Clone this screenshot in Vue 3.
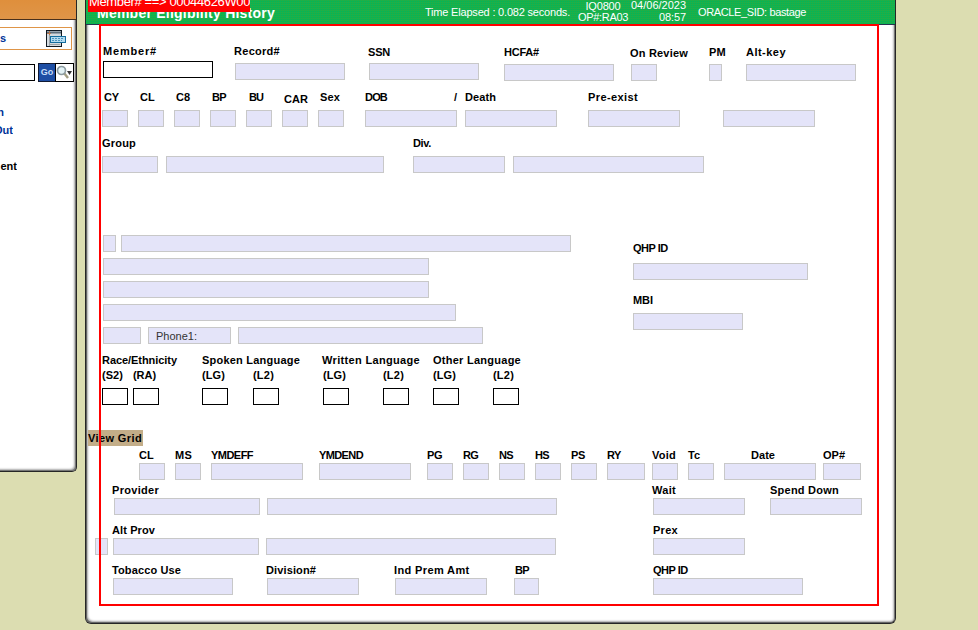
<script setup>
const ctx = document.createElement('canvas').getContext('2d')

function spacing(text, width, font) {
  ctx.font = font
  return (width - ctx.measureText(text).width) / text.length + 'px'
}

const label = (text, x, w, y) => ({ kind: 'label', text, x, w, y })
const field = (x, w, y, text) => ({ kind: 'field', x, w, y, text })
const entry = (x, w, y) => ({ kind: 'entry', x, w, y })
const heightOf = { label: 12, field: 17, entry: 17, tag: 16 }

const row = (...items) => items
const labels = (y, ...list) => list.map(([t, x, w, own]) => label(t, x, w, own ?? y))
const fields = (y, ...list) => list.map(([x, w, t]) => field(x, w, y, t))

function flow(rows, x0, y0) {
  let bottom = y0
  return rows.map((items) => {
    const top = Math.min(...items.map((i) => i.y))
    const end = Math.max(...items.map((i) => i.y + heightOf[i.kind]))
    let right = x0
    const cells = items.map((i) => {
      const style = { marginLeft: i.x - right + 'px', marginTop: i.y - top + 'px', width: i.w + 'px' }
      if (i.kind === 'label' || i.kind === 'tag') {
        style.letterSpacing = spacing(i.text, i.kind === 'tag' ? 54 : i.w, 'bold 11px "Liberation Sans"')
      }
      right = i.x + i.w
      return { ...i, style }
    })
    const style = { marginTop: top - bottom + 'px', height: end - top + 'px' }
    bottom = end
    return { cells, style }
  })
}

const sections = [
  [flow([
    labels(46, ['Member#', 103, 54, 45], ['Record#', 234, 46, 45], ['SSN', 368, 22], ['HCFA#', 504, 35], ['On Review', 630, 58, 47], ['PM', 709, 17], ['Alt-key', 746, 40]),
    row(entry(103, 110, 61), field(235, 110, 63), field(369, 110, 63), field(504, 110, 64), field(631, 26, 64), field(709, 13, 64), field(746, 110, 64)),
    labels(91, ['CY', 104, 15], ['CL', 140, 15], ['C8', 176, 14], ['BP', 212, 14], ['BU', 249, 14], ['CAR', 284, 24, 93], ['Sex', 320, 20], ['DOB', 365, 22], ['/', 454, 4], ['Death', 465, 31], ['Pre-exist', 588, 50]),
    fields(110, [102, 26], [138, 26], [174, 26], [210, 26], [246, 26], [282, 26], [318, 26], [365, 92], [465, 92], [588, 92], [723, 92]),
    labels(137, ['Group', 102, 34], ['Div.', 413, 18]),
    fields(156, [102, 56], [166, 218], [413, 92], [513, 191]),
  ], 87, 24)],
  [
    flow([
      fields(235, [103, 13], [121, 450]),
      fields(258, [103, 326]),
      fields(281, [103, 326]),
      fields(304, [103, 353]),
      fields(327, [103, 38], [148, 83, 'Phone1:'], [238, 245]),
    ], 87, 173),
    flow([
      labels(242, ['QHP ID', 633, 35]),
      fields(263, [633, 175]),
      labels(294, ['MBI', 633, 20]),
      fields(313, [633, 110]),
    ], 571, 173),
  ],
  [flow([
    labels(354, ['Race/Ethnicity', 102, 75], ['Spoken Language', 202, 98], ['Written Language', 322, 98], ['Other Language', 433, 88]),
    labels(369, ['(S2)', 102, 21], ['(RA)', 133, 23], ['(LG)', 202, 23], ['(L2)', 253, 21], ['(LG)', 323, 23], ['(L2)', 383, 21], ['(LG)', 433, 23], ['(L2)', 493, 21]),
    [102, 133, 202, 253, 323, 383, 433, 493].map((x) => entry(x, 26, 388)),
    row({ kind: 'tag', text: 'View Grid', x: 88, w: 55, y: 430 }),
    labels(449, ['CL', 139, 15], ['MS', 175, 17], ['YMDEFF', 211, 42], ['YMDEND', 319, 44], ['PG', 427, 15], ['RG', 463, 15], ['NS', 499, 14], ['HS', 535, 14], ['PS', 571, 14], ['RY', 607, 14], ['Void', 652, 24], ['Tc', 688, 12], ['Date', 751, 24], ['OP#', 823, 22]),
    fields(463, [139, 26], [175, 26], [211, 92], [319, 92], [427, 26], [463, 26], [499, 26], [535, 26], [571, 26], [607, 38], [652, 26], [688, 26], [724, 92], [823, 38]),
    labels(484, ['Provider', 112, 47], ['Wait', 652, 24], ['Spend Down', 770, 69]),
    fields(498, [114, 146], [267, 290], [653, 92], [770, 92]),
    labels(524, ['Alt Prov', 112, 43], ['Prex', 653, 25]),
    fields(538, [95, 13], [113, 146], [266, 290], [653, 92]),
    labels(564, ['Tobacco Use', 112, 69], ['Division#', 266, 50], ['Ind Prem Amt', 394, 76], ['BP', 515, 14], ['QHP ID', 653, 35]),
    fields(578, [113, 120], [267, 92], [395, 92], [514, 25], [653, 150]),
  ], 87, 344)],
]

const normal = '11px "Liberation Sans"'
const ls = (text, width, font = normal) => ({ letterSpacing: spacing(text, width, font) })
</script>

<template>
  <div class="screen">
    <aside class="side">
      <div class="side-head"></div>
      <div class="side-title">
        <span>s</span>
        <svg width="21" height="18" viewBox="0 0 21 18">
          <rect x="0.5" y="0.5" width="15" height="16" fill="#d3dadf" stroke="#111820" />
          <path d="M1 2.5H15" stroke="#5d6d7b" stroke-width="2" />
          <path d="M1 3.5H5M3.5 1V6" stroke="#b9774d" />
          <path d="M3.5 5V16M4 14.5H14" stroke="#9ba3a9" />
          <path d="M15.5 0V17" stroke="#111820" />
          <rect x="4.5" y="6.5" width="15" height="6" fill="#b2daf0" stroke="#146d9e" />
          <path d="M6 8.5H18M6 10.5H16" stroke="#4b93bd" stroke-dasharray="2 1" />
        </svg>
      </div>
      <div class="search">
        <span class="search-input"></span>
        <span class="go">Go</span>
        <span class="find">
          <svg width="16" height="17" viewBox="0 0 16 17">
            <path d="M8 9L12 14" stroke="#a39f83" stroke-width="2.4" />
            <circle cx="5.5" cy="6.5" r="4" fill="#e3f2f5" stroke="#8c9ba0" stroke-width="1.7" />
            <path d="M11 7H16L13.5 11Z" fill="#333" />
          </svg>
        </span>
      </div>
      <nav class="links">
        <span class="link n">n</span>
        <span class="link out">Out</span>
        <span class="link ent">ent</span>
      </nav>
    </aside>

    <main class="panel">
      <header class="banner">
        <h1 :style="ls('Member Eligibility History', 178, 'bold 14px &quot;Liberation Sans&quot;')">Member Eligibility History</h1>
        <span class="elapsed" :style="ls('Time Elapsed : 0.082 seconds.', 145)">Time Elapsed : 0.082 seconds.</span>
        <div class="pair program">
          <span :style="ls('IQ0800', 35)">IQ0800</span>
          <span :style="ls('OP#:RA03', 50)">OP#:RA03</span>
        </div>
        <div class="pair clock">
          <span :style="ls('04/06/2023', 55)">04/06/2023</span>
          <span :style="ls('08:57', 27)">08:57</span>
        </div>
        <span class="sid" :style="ls('ORACLE_SID: bastage', 108)">ORACLE_SID: bastage</span>
        <div class="notice" :style="ls('Member# ==> 00044626W00', 161, '13px &quot;Liberation Sans&quot;')">Member# ==&gt; 00044626W00</div>
      </header>
      <section v-for="(cols, s) in sections" :key="s" class="section">
        <div v-for="(rows, c) in cols" :key="c" class="column">
          <div v-for="(r, i) in rows" :key="i" class="row" :style="r.style">
            <span v-for="(cell, k) in r.cells" :key="k" :class="cell.kind" :style="cell.style">{{ cell.text }}</span>
          </div>
        </div>
      </section>
      <div class="outline"></div>
    </main>
  </div>
</template>

<style>
body {
  overflow: hidden;
  background: #dcddb1;
}
</style>

<style scoped>
.screen {
  display: flex;
  align-items: flex-start;
  gap: 8px;
  width: 978px;
  height: 630px;
  background: #dcddb1;
  font: 11px/12px "Liberation Sans", Arial, sans-serif;
  color: #000;
}
.side {
  box-sizing: border-box;
  flex: none;
  width: 77px;
  height: 472px;
  overflow: hidden;
  background: #fff;
  border-right: 1px solid #262626;
  border-bottom: 1px solid #262626;
  border-radius: 0 0 5px 0;
  box-shadow: inset -1px -1px 0 #777, inset -2px -2px 2px #aaa;
}
.side-head {
  height: 19px;
  background: linear-gradient(#df8f3c, #df9548);
  border-bottom: 1px solid #49301c;
}
.side-title {
  box-sizing: border-box;
  display: flex;
  justify-content: space-between;
  align-items: center;
  width: 72px;
  height: 23px;
  margin-top: 7px;
  padding-right: 4px;
  background: #fff;
  border: 1px solid #df9548;
  border-left: 0;
  color: #003399;
  font-weight: bold;
}
.side-title svg {
  margin-top: 1px;
}
.side-title span {
  margin-top: -1px;
}
.search {
  display: flex;
  align-items: center;
  height: 19px;
  margin-top: 13px;
}
.search-input {
  box-sizing: border-box;
  width: 35px;
  height: 17px;
  border: 1px solid #000;
  border-left: 0;
}
.go {
  box-sizing: border-box;
  width: 17px;
  height: 19px;
  margin-left: 3px;
  border: 1px solid #111a33;
  border-right: 0;
  background: #1d4ea4;
  color: #c7ddf8;
  font-size: 9px;
  font-weight: bold;
  line-height: 17px;
  text-align: center;
}
.find {
  box-sizing: border-box;
  width: 19px;
  height: 19px;
  border: 1px solid #000;
  background: #fff;
}
.find svg {
  display: block;
}
.links {
  padding-top: 24px;
  font-weight: bold;
}
.link {
  display: flex;
  justify-content: flex-end;
  height: 12px;
  overflow: hidden;
  color: #003399;
}
.n {
  width: 4px;
}
.out {
  width: 13px;
  margin-top: 6px;
}
.ent {
  width: 17px;
  margin-top: 24px;
  color: #000;
}
.panel {
  position: relative;
  box-sizing: border-box;
  flex: none;
  width: 811px;
  height: 624px;
  padding: 0 1px;
  background: #fff;
  border: 1px solid #262626;
  border-top: 0;
  border-radius: 0 0 6px 6px;
  box-shadow: inset 1px -1px 0 #666, inset -1px 0 0 #777, inset 2px -2px 2px #aaa, inset -2px 0 2px #bbb;
}
.banner {
  display: flex;
  align-items: flex-start;
  box-sizing: border-box;
  height: 25px;
  margin: 0 -1px -1px;
  border-bottom: 1px solid #26334f;
  background:
    repeating-linear-gradient(90deg, rgba(0, 184, 96, 0.5) 0 1px, transparent 1px 2px),
    repeating-linear-gradient(0deg, #12b04c 0 1px, #2aac40 1px 2px);
  color: #fff;
  white-space: nowrap;
}
.banner h1 {
  width: 178px;
  margin: 5px 0 0 11px;
  font-size: 14px;
  line-height: 16px;
}
.elapsed {
  width: 145px;
  margin: 6px 0 0 150px;
}
.pair {
  display: flex;
  flex-direction: column;
}
.program {
  align-items: center;
  width: 50px;
  margin-left: 8px;
}
.clock {
  align-items: flex-end;
  width: 55px;
  margin: -1px 0 0 3px;
}
.program span + span {
  margin-top: -1px;
}
.sid {
  margin: 6px 0 0 12px;
}
.notice {
  position: absolute;
  top: 0;
  left: 2px;
  box-sizing: border-box;
  width: 162px;
  height: 12px;
  padding-left: 1px;
  background: #f00;
  font-size: 13px;
  line-height: 4px;
  overflow: hidden;
}
.section,
.row {
  display: flex;
  align-items: flex-start;
}
.row > span {
  box-sizing: border-box;
  flex: none;
  white-space: nowrap;
}
.label,
.tag {
  height: 12px;
  font-weight: bold;
}
.tag {
  height: 16px;
  background: #c3ad88;
  line-height: 16px;
}
.field,
.entry {
  height: 17px;
  border: 1px solid #c8c8c8;
  background: #e4e4f9;
  color: #333;
  line-height: 17px;
}
.field {
  padding-left: 7px;
}
.field:empty {
  padding: 0;
}
.entry {
  border-color: #000;
  background: #fff;
}
.outline {
  position: absolute;
  top: 24px;
  left: 13px;
  box-sizing: border-box;
  width: 780px;
  height: 582px;
  border: 2px solid #f00;
  pointer-events: none;
}
</style>
